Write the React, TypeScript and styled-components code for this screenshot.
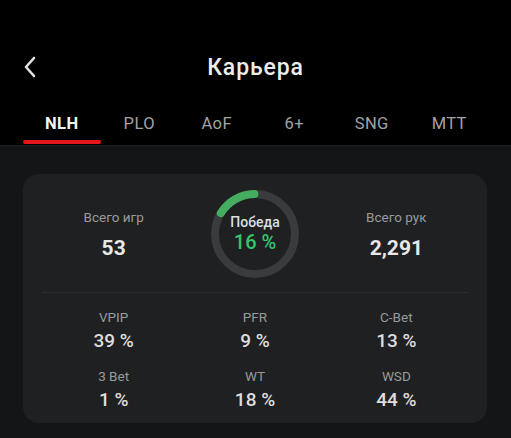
import styled, { createGlobalStyle } from "styled-components";

const GlobalStyle = createGlobalStyle`
  html, body {
    margin: 0;
    padding: 0;
    background: #141516;
  }
  body {
    font-family: Roboto, "Noto Sans", "Liberation Sans", sans-serif;
    -webkit-font-smoothing: antialiased;
  }
`;

const Page = styled.div`
  width: 511px;
  height: 438px;
  overflow: hidden;
  display: flex;
  flex-direction: column;
  background: #141516;
`;

const Header = styled.header`
  background: #000;
  padding-top: 44px;
  border-bottom: 1px solid #1c1d1f;
`;

const TopBar = styled.div`
  height: 48px;
  display: flex;
  align-items: center;
  justify-content: center;
  position: relative;
`;

const BackButton = styled.button`
  position: absolute;
  left: 18px;
  top: 11px;
  width: 24px;
  height: 24px;
  padding: 0;
  border: none;
  background: none;
  display: flex;
  align-items: center;
  justify-content: center;
  cursor: pointer;
`;

const Title = styled.h1`
  margin: 0;
  padding-bottom: 2px;
  font-size: 23px;
  font-weight: 500;
  color: #ececec;
  letter-spacing: 0.9px;
`;

const TabBar = styled.nav`
  margin-top: 12px;
  padding: 0 23px;
  display: grid;
  grid-template-columns: repeat(6, 1fr);
  height: 41px;
`;

const Tab = styled.div<{ $active?: boolean }>`
  position: relative;
  display: flex;
  align-items: center;
  justify-content: center;
  padding-bottom: 2px;
  font-size: 16.5px;
  letter-spacing: 0.4px;
  font-weight: ${(p) => (p.$active ? 700 : 400)};
  color: ${(p) => (p.$active ? "#f2f2f2" : "#a3a3a3")};

  &::after {
    content: "";
    display: ${(p) => (p.$active ? "block" : "none")};
    position: absolute;
    left: 0;
    right: 0;
    bottom: 1px;
    height: 4px;
    border-radius: 2px;
    background: #e3161c;
  }
`;

const Body = styled.main`
  padding: 28px 24px 0 23px;
`;

const Card = styled.section`
  background: #1f2022;
  border-radius: 16px;
  padding: 16px 20px 11px;
`;

const SummaryRow = styled.div`
  display: grid;
  grid-template-columns: repeat(3, 1fr);
  align-items: center;
  height: 88px;
`;

const Summary = styled.div`
  display: flex;
  flex-direction: column;
  align-items: center;
`;

const SummaryLabel = styled.span`
  font-size: 13.5px;
  line-height: 20px;
  color: #9a9a9a;
`;

const SummaryValue = styled.span`
  margin-top: 8px;
  font-size: 21px;
  line-height: 26px;
  font-weight: 700;
  color: #e8e8e8;
`;

const RingBox = styled.div`
  position: relative;
  width: 88px;
  height: 88px;
  justify-self: center;
`;

const RingText = styled.div`
  position: absolute;
  inset: 0;
  display: flex;
  flex-direction: column;
  align-items: center;
  justify-content: center;
  padding-bottom: 2px;
`;

const RingLabel = styled.span`
  font-size: 14px;
  line-height: 18px;
  font-weight: 500;
  color: #dedede;
`;

const RingValue = styled.span`
  font-size: 20px;
  line-height: 22px;
  font-weight: 500;
  color: #37c46d;
`;

const Divider = styled.hr`
  margin: 14px 0 14px;
  border: none;
  border-top: 1px dotted #34363a;
`;

const StatsGrid = styled.div`
  display: grid;
  grid-template-columns: repeat(3, 1fr);
  row-gap: 13px;
`;

const Stat = styled.div`
  display: flex;
  flex-direction: column;
  align-items: center;
`;

const StatLabel = styled.span`
  font-size: 13.5px;
  line-height: 20px;
  color: #9a9a9a;
`;

const StatValue = styled.span`
  margin-top: 2px;
  font-size: 19px;
  line-height: 24px;
  font-weight: 500;
  color: #dedede;
`;

const tabs = ["NLH", "PLO", "AoF", "6+", "SNG", "MTT"];

const stats = [
  { label: "VPIP", value: "39 %" },
  { label: "PFR", value: "9 %" },
  { label: "C-Bet", value: "13 %" },
  { label: "3 Bet", value: "1 %" },
  { label: "WT", value: "18 %" },
  { label: "WSD", value: "44 %" },
];

const WinRing = ({ percent }: { percent: number }) => {
  const r = 40;
  const c = 2 * Math.PI * r;
  const arc = (percent / 100) * c;
  // arc ends just before 12 o'clock
  const start = -90 - (percent / 100) * 360 - 1;
  return (
    <RingBox>
      <svg width="88" height="88" viewBox="0 0 88 88">
        <circle cx="44" cy="44" r={r} fill="none" stroke="#3a3b3e" strokeWidth="8" />
        <circle
          cx="44"
          cy="44"
          r={r}
          fill="none"
          stroke="#45ad5f"
          strokeWidth="8"
          strokeLinecap="round"
          strokeDasharray={`${arc} ${c}`}
          transform={`rotate(${start} 44 44)`}
        />
      </svg>
      <RingText>
        <RingLabel>Победа</RingLabel>
        <RingValue>{percent} %</RingValue>
      </RingText>
    </RingBox>
  );
};

const App = () => {
  return (
    <>
      <GlobalStyle />
      <Page>
        <Header>
          <TopBar>
            <BackButton aria-label="back">
              <svg width="16" height="24" viewBox="0 0 16 24">
                <path
                  d="M12 3 L4 12 L12 21"
                  fill="none"
                  stroke="#e0e0e0"
                  strokeWidth="2.6"
                  strokeLinecap="round"
                  strokeLinejoin="round"
                />
              </svg>
            </BackButton>
            <Title>Карьера</Title>
          </TopBar>
          <TabBar>
            {tabs.map((t, i) => (
              <Tab key={t} $active={i === 0}>
                {t}
              </Tab>
            ))}
          </TabBar>
        </Header>
        <Body>
          <Card>
            <SummaryRow>
              <Summary>
                <SummaryLabel>Всего игр</SummaryLabel>
                <SummaryValue>53</SummaryValue>
              </Summary>
              <WinRing percent={16} />
              <Summary>
                <SummaryLabel>Всего рук</SummaryLabel>
                <SummaryValue>2,291</SummaryValue>
              </Summary>
            </SummaryRow>
            <Divider />
            <StatsGrid>
              {stats.map((s) => (
                <Stat key={s.label}>
                  <StatLabel>{s.label}</StatLabel>
                  <StatValue>{s.value}</StatValue>
                </Stat>
              ))}
            </StatsGrid>
          </Card>
        </Body>
      </Page>
    </>
  );
};

export default App;
